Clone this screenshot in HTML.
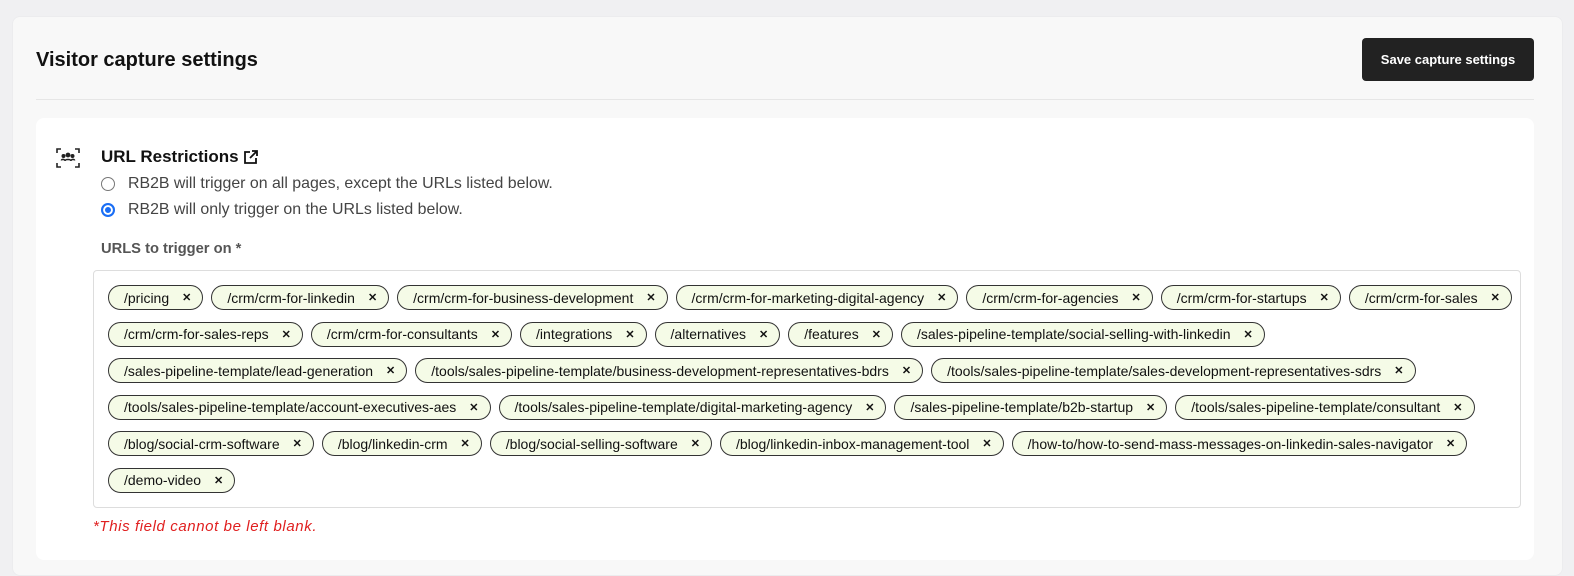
<!DOCTYPE html>
<html><head><meta charset="utf-8"><style>
*{box-sizing:border-box;margin:0;padding:0}
body{width:1574px;height:566px;background:#f0f0f2;font-family:"Liberation Sans",sans-serif;overflow:hidden;position:relative}
.card{position:absolute;left:12px;top:16px;width:1551px;height:560px;background:#f8f8f8;border-radius:8px;border:1px solid #ececee}
.title{position:absolute;left:36px;top:49px;font-size:20px;font-weight:bold;color:#111}
.btn{position:absolute;left:1362px;top:38px;width:172px;height:43px;background:#222;border-radius:4px;color:#fff;font-size:13px;font-weight:bold;display:flex;align-items:center;justify-content:center}
.div{position:absolute;left:36px;top:99px;width:1498px;height:1px;background:#e6e6e6}
.inner{position:absolute;left:36px;top:118px;width:1498px;height:442px;background:#fff;border-radius:8px}
.icon{position:absolute;left:56px;top:148px}
.h{position:absolute;left:101px;top:147px;font-size:17px;font-weight:bold;color:#111;display:flex;align-items:center;gap:4px}
.r{position:absolute;left:101px;font-size:15.9px;color:#444;display:flex;align-items:center;gap:13px}
.rad{width:14px;height:14px;border-radius:50%;border:1px solid #777;background:#fff}
.rad.on{border:2px solid #1a6ef5;background:#1a6ef5;box-shadow:inset 0 0 0 2px #fff}
.lbl{position:absolute;left:101px;top:241px;font-size:14.7px;font-weight:bold;color:#555}
.box{position:absolute;left:93px;top:270px;width:1428px;height:238px;border:1px solid #ddd;border-radius:4px;background:#fff;padding:14px 0 0 14px}
.row{display:flex;gap:8px;margin-bottom:11.5px}
.t{height:25px;border:1px solid #333;border-radius:13px;background:#f5fbe7;font-size:14px;color:#111;display:flex;align-items:center;padding:0 11px 0 15px;white-space:nowrap}
.t b{font-size:11px;margin-left:13px}
.err{position:absolute;left:93px;top:518px;font-size:15px;letter-spacing:0.6px;font-style:italic;color:#e02020}
</style></head><body>
<div class="card"></div>
<div class="title">Visitor capture settings</div>
<div class="btn">Save capture settings</div>
<div class="div"></div>
<div class="inner"></div>
<svg class="icon" width="24" height="20" viewBox="0 0 24 20" fill="none" stroke="#222" stroke-width="1.6"><path d="M1 5V1h4M19 1h4v4M1 15v4h4M19 19h4v-4"/><circle cx="12" cy="7" r="1.6" fill="#222"/><circle cx="7.5" cy="8" r="1.2" fill="#222"/><circle cx="16.5" cy="8" r="1.2" fill="#222"/><path d="M9 13c0-2 6-2 6 0M5.5 12.5c0-1.5 3-1.5 3 0M15.5 12.5c0-1.5 3-1.5 3 0"/></svg>
<div class="h">URL Restrictions <svg width="16" height="16" viewBox="0 0 16 16" fill="none" stroke="#111" stroke-width="1.8"><path d="M7 3H2v11h11V9M9 2h5v5M14 2L7 9"/></svg></div>
<div class="r" style="top:175px"><span class="rad"></span>RB2B will trigger on all pages, except the URLs listed below.</div>
<div class="r" style="top:201px"><span class="rad on"></span>RB2B will only trigger on the URLs listed below.</div>
<div class="lbl">URLS to trigger on *</div>
<div class="box">
<div class="row"><span class="t">/pricing<b>✕</b></span><span class="t">/crm/crm-for-linkedin<b>✕</b></span><span class="t">/crm/crm-for-business-development<b>✕</b></span><span class="t">/crm/crm-for-marketing-digital-agency<b>✕</b></span><span class="t">/crm/crm-for-agencies<b>✕</b></span><span class="t">/crm/crm-for-startups<b>✕</b></span><span class="t">/crm/crm-for-sales<b>✕</b></span></div>
<div class="row"><span class="t">/crm/crm-for-sales-reps<b>✕</b></span><span class="t">/crm/crm-for-consultants<b>✕</b></span><span class="t">/integrations<b>✕</b></span><span class="t">/alternatives<b>✕</b></span><span class="t">/features<b>✕</b></span><span class="t">/sales-pipeline-template/social-selling-with-linkedin<b>✕</b></span></div>
<div class="row"><span class="t">/sales-pipeline-template/lead-generation<b>✕</b></span><span class="t">/tools/sales-pipeline-template/business-development-representatives-bdrs<b>✕</b></span><span class="t">/tools/sales-pipeline-template/sales-development-representatives-sdrs<b>✕</b></span></div>
<div class="row"><span class="t">/tools/sales-pipeline-template/account-executives-aes<b>✕</b></span><span class="t">/tools/sales-pipeline-template/digital-marketing-agency<b>✕</b></span><span class="t">/sales-pipeline-template/b2b-startup<b>✕</b></span><span class="t">/tools/sales-pipeline-template/consultant<b>✕</b></span></div>
<div class="row"><span class="t">/blog/social-crm-software<b>✕</b></span><span class="t">/blog/linkedin-crm<b>✕</b></span><span class="t">/blog/social-selling-software<b>✕</b></span><span class="t">/blog/linkedin-inbox-management-tool<b>✕</b></span><span class="t">/how-to/how-to-send-mass-messages-on-linkedin-sales-navigator<b>✕</b></span></div>
<div class="row"><span class="t">/demo-video<b>✕</b></span></div>
</div>
<div class="err">*This field cannot be left blank.</div>
</body></html>
